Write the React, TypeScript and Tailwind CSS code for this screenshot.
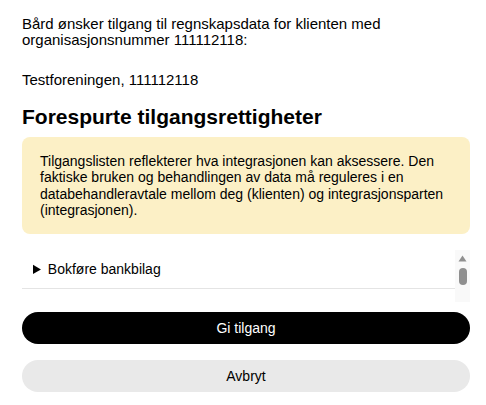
const permissions = [
  "Bokføre bankbilag",
  "Lese regnskapsdata",
  "Lese kontoplan",
  "Lese bilag",
] as const;

export default function App() {
  return (
    <div
      className="min-h-screen bg-white pl-[22px] pr-[16px] pt-[16px] text-black"
      style={{ fontFamily: '"Liberation Sans", Arial, sans-serif' }}
    >
      <p className="text-[15px] leading-[16px]">
        Bård ønsker tilgang til regnskapsdata for klienten med organisasjonsnummer 111112118:
      </p>
      <p className="mt-[24px] text-[15px] leading-[16px]">Testforeningen, 111112118</p>

      <h2 className="mt-[17px] text-[21px] font-bold leading-[24px]">
        Forespurte tilgangsrettigheter
      </h2>

      {/* Info box */}
      <div className="mt-[8px] rounded-[8px] bg-[#fcf0c6] px-[18px] pb-[16px] pt-[16px] text-[14px] leading-[16.3px]">
        Tilgangslisten reflekterer hva integrasjonen kan aksessere. Den faktiske bruken og
        behandlingen av data må reguleres i en databehandleravtale mellom deg (klienten) og
        integrasjonsparten (integrasjonen).
      </div>

      {/* Permission list with scrollbar */}
      <div className="mt-[16px] flex h-[52px]">
        <div className="min-w-0 flex-1 overflow-hidden">
          <ul role="list">
            {permissions.map((label) => (
              <li key={label} className="border-b border-[#e4e4e4]">
                <details>
                  <summary className="cursor-pointer py-[11px] pl-[11px] text-[14px] leading-[16px]">
                    {label}
                  </summary>
                </details>
              </li>
            ))}
          </ul>
        </div>
        <div className="flex w-[15px] flex-col items-center bg-[#f9f9f9]">
          <svg width="9" height="7" viewBox="0 0 9 7" className="mt-[5px]">
            <path d="M4.5 0.5 L8.5 6.5 L0.5 6.5 Z" fill="#8f8f8f" />
          </svg>
          <div className="mt-[6px] h-[17px] w-[8px] rounded-full bg-[#8f8f8f]" />
        </div>
      </div>

      {/* Actions */}
      <div className="mt-[10px] flex flex-col gap-[16px]">
        <button className="h-[32px] w-full rounded-full bg-black text-[14px] text-white">
          Gi tilgang
        </button>
        <button className="h-[32px] w-full rounded-full bg-[#e9e9e9] text-[14px] text-black">
          Avbryt
        </button>
      </div>
    </div>
  );
}
